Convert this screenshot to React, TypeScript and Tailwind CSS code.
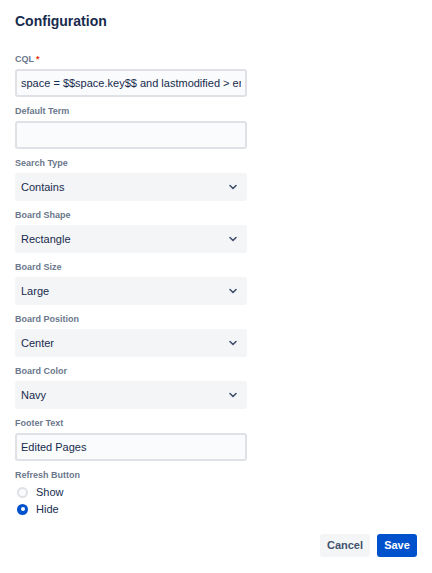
import React from "react";

const font = { fontFamily: '"Liberation Sans", Arial, sans-serif' };

const Chevron = () => (
  <svg width="10" height="10" viewBox="0 0 10 10" className="text-[#42526E]">
    <path d="M2 3.5 L5 6.5 L8 3.5" fill="none" stroke="currentColor" strokeWidth="1.6" strokeLinecap="round" strokeLinejoin="round" />
  </svg>
);

const Label: React.FC<{ text: string; required?: boolean }> = ({ text, required }) => (
  <div className="h-[12px] leading-[12px] text-[9px] font-bold text-[#6B778C] mb-[4px]">
    {text}
    {required && <span className="text-[#DE350B] ml-[2px]">*</span>}
  </div>
);

const TextField: React.FC<{ value: string }> = ({ value }) => (
  <input
    readOnly
    value={value}
    className="block w-[232px] h-[28px] border-2 border-[#DFE1E6] bg-[#FAFBFC] rounded-[3px] px-[4px] text-[11px] text-[#172B4D] outline-none"
    style={font}
  />
);

const SelectField: React.FC<{ value: string }> = ({ value }) => (
  <div className="w-[232px] h-[28px] bg-[#F4F5F7] rounded-[3px] pl-[6px] pr-[9px] flex items-center justify-between">
    <span className="text-[11px] text-[#172B4D]">{value}</span>
    <Chevron />
  </div>
);

const selects = [
  { label: "Search Type", value: "Contains" },
  { label: "Board Shape", value: "Rectangle" },
  { label: "Board Size", value: "Large" },
  { label: "Board Position", value: "Center" },
  { label: "Board Color", value: "Navy" },
];

const App: React.FC = () => {
  return (
    <div className="w-[432px] h-[573px] bg-white px-[15px] pt-[12px] flex flex-col" style={font}>
      <h1 className="h-[18px] leading-[18px] text-[14px] font-bold text-[#172B4D] mb-[23px]">Configuration</h1>

      <div className="flex flex-col gap-[8px]">
        <div>
          <Label text="CQL" required />
          <TextField value="space = $$space.key$$ and lastmodified > endOfDay(-7d)" />
        </div>
        <div>
          <Label text="Default Term" />
          <TextField value="" />
        </div>
        {selects.map((s) => (
          <div key={s.label}>
            <Label text={s.label} />
            <SelectField value={s.value} />
          </div>
        ))}
        <div>
          <Label text="Footer Text" />
          <TextField value="Edited Pages" />
        </div>
        <div>
          <Label text="Refresh Button" />
          <div className="flex flex-col gap-[5px] pl-[2px] pt-[1px]">
            <div className="flex items-center gap-[8px] h-[12px]">
              <span className="w-[11px] h-[11px] rounded-full border-2 border-[#DFE1E6] bg-[#FAFBFC]" />
              <span className="text-[11px] text-[#172B4D]">Show</span>
            </div>
            <div className="flex items-center gap-[8px] h-[12px]">
              <span className="w-[11px] h-[11px] rounded-full bg-[#0052CC] flex items-center justify-center">
                <span className="w-[4px] h-[4px] rounded-full bg-white" />
              </span>
              <span className="text-[11px] text-[#172B4D]">Hide</span>
            </div>
          </div>
        </div>
      </div>

      <div className="flex justify-end gap-[7px] mt-[19px]">
        <button className="h-[23px] w-[50px] rounded-[3px] bg-[#F4F5F7] text-[11px] font-bold text-[#42526E]">Cancel</button>
        <button className="h-[23px] w-[40px] rounded-[3px] bg-[#0052CC] text-[11px] font-bold text-white">Save</button>
      </div>
    </div>
  );
};

export default App;
